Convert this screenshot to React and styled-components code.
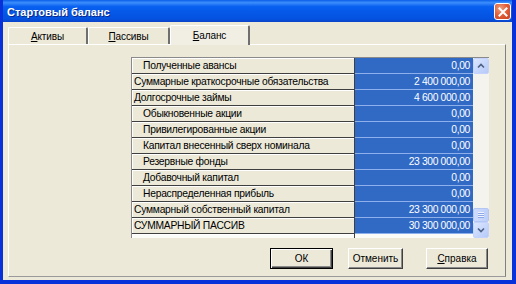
import React from "react";
import styled, { createGlobalStyle } from "styled-components";

const GlobalStyle = createGlobalStyle`
  html, body {
    margin: 0;
    padding: 0;
    background: #0a246a;
  }
  body {
    font-family: "Liberation Sans", Arial, sans-serif;
  }
`;

const rows = [
  { label: "Полученные авансы", value: "0,00", indent: true },
  { label: "Суммарные краткосрочные обязательства", value: "2 400 000,00" },
  { label: "Долгосрочные займы", value: "4 600 000,00" },
  { label: "Обыкновенные акции", value: "0,00", indent: true },
  { label: "Привилегированные акции", value: "0,00", indent: true },
  { label: "Капитал внесенный сверх номинала", value: "0,00", indent: true },
  { label: "Резервные фонды", value: "23 300 000,00", indent: true },
  { label: "Добавочный капитал", value: "0,00", indent: true },
  { label: "Нераспределенная прибыль", value: "0,00", indent: true },
  { label: "Суммарный собственный капитал", value: "23 300 000,00" },
  { label: "СУММАРНЫЙ ПАССИВ", value: "30 300 000,00" },
];

const tabs = [
  { key: "А", rest: "ктивы", width: 80 },
  { key: "П", rest: "ассивы", width: 82 },
  { key: "Б", rest: "аланс", width: 80, active: true },
];

const App = () => {
  return (
    <>
      <GlobalStyle />
      <Window>
        <TitleBar>
          <Title>Стартовый баланс</Title>
          <CloseButton>
            <svg width="10" height="10" viewBox="0 0 10 10">
              <path d="M1.5 1.5 L8.5 8.5 M8.5 1.5 L1.5 8.5" stroke="#fff" strokeWidth="2" strokeLinecap="square" />
            </svg>
          </CloseButton>
        </TitleBar>
        <Body>
          <TabStrip>
            {tabs.map((t) => (
              <Tab key={t.key} $width={t.width} $active={t.active}>
                <u>{t.key}</u>
                {t.rest}
              </Tab>
            ))}
          </TabStrip>
          <Pane>
            <GridWrap>
              <Grid>
                {rows.map((r) => (
                  <Row key={r.label}>
                    <LabelCell $indent={r.indent}>{r.label}</LabelCell>
                    <ValueCell>{r.value}</ValueCell>
                  </Row>
                ))}
                <Row>
                  <LabelCell $blank />
                  <ValueCell $blank />
                </Row>
              </Grid>
              <ScrollBar>
                <ScrollButton>
                  <svg width="8" height="6" viewBox="0 0 8 6">
                    <path d="M1 4.5 L4 1.5 L7 4.5" stroke="#4d6185" strokeWidth="1.6" fill="none" />
                  </svg>
                </ScrollButton>
                <Track />
                <Thumb>
                  <Grip />
                </Thumb>
                <ScrollButton>
                  <svg width="8" height="6" viewBox="0 0 8 6">
                    <path d="M1 1.5 L4 4.5 L7 1.5" stroke="#4d6185" strokeWidth="1.6" fill="none" />
                  </svg>
                </ScrollButton>
              </ScrollBar>
            </GridWrap>
            <ButtonRow>
              <Button $width={63} $default>ОК</Button>
              <Button $width={55} $gap={15}>Отменить</Button>
              <Button $width={62} $gap={23}>
                <u>С</u>правка
              </Button>
            </ButtonRow>
          </Pane>
        </Body>
      </Window>
    </>
  );
};

const Window = styled.div`
  width: 516px;
  height: 284px;
  box-sizing: border-box;
  display: flex;
  flex-direction: column;
  background: #0b47d6;
  border-left: 3px solid #0831d9;
  border-right: 4px solid #0831d9;
  border-bottom: 4px solid #0831d9;
  overflow: hidden;
`;

const TitleBar = styled.div`
  height: 22px;
  margin: 0 -4px 0 -3px;
  padding: 0 5px 0 7px;
  display: flex;
  align-items: center;
  justify-content: space-between;
  background: linear-gradient(
    to bottom,
    #0a5fe9 0%,
    #3c8dfb 12%,
    #0860f0 30%,
    #0557e6 60%,
    #0552e0 85%,
    #0a44c9 100%
  );
`;

const Title = styled.span`
  color: #fff;
  font-family: "Liberation Sans", Arial, sans-serif;
  font-weight: bold;
  font-size: 11px;
  text-shadow: 1px 1px 0 #0a2a8a;
  padding-top: 1px;
`;

const CloseButton = styled.div`
  width: 17px;
  height: 17px;
  margin-top: 1px;
  box-sizing: border-box;
  border: 1px solid #fff;
  border-radius: 3px;
  background: radial-gradient(circle at 35% 30%, #f0a080 0%, #e1603a 45%, #c9401c 100%);
  display: flex;
  align-items: center;
  justify-content: center;
`;

const Body = styled.div`
  flex: 1;
  display: flex;
  flex-direction: column;
  background: #ece9d8;
  padding: 0 6px 3px 5px;
`;

const TabStrip = styled.div`
  height: 22px;
  display: flex;
  align-items: flex-end;
  position: relative;
  z-index: 1;
`;

const Tab = styled.div`
  width: ${(p) => p.$width}px;
  height: ${(p) => (p.$active ? 20 : 17)}px;
  box-sizing: border-box;
  display: flex;
  align-items: center;
  justify-content: center;
  padding-top: ${(p) => (p.$active ? 0 : 1)}px;
  margin-bottom: ${(p) => (p.$active ? -1 : 0)}px;
  background: ${(p) => (p.$active ? "#f1efe4" : "#ece9d8")};
  border-top: 1px solid #fff;
  border-left: 1px solid #fff;
  border-right: 2px solid #6f6f6f;
  border-radius: 2px 2px 0 0;
  font-size: 10px;
  letter-spacing: -0.1px;
  color: #000;
  u {
    text-decoration: underline;
    text-underline-offset: 1px;
  }
`;

const Pane = styled.div`
  flex: 1;
  box-sizing: border-box;
  border-top: 1px solid #fff;
  border-left: 1px solid #fff;
  border-right: 1px solid #808080;
  border-bottom: 1px solid #9a9a9a;
  padding: 12px 0 0 122px;
  display: flex;
  flex-direction: column;
`;

const GridWrap = styled.div`
  width: 358px;
  height: 181px;
  display: flex;
  box-sizing: border-box;
  border-top: 1px solid #8a8a8a;
  border-left: 1px solid #8a8a8a;
  overflow: hidden;
`;

const Grid = styled.div`
  width: 341px;
  display: flex;
  flex-direction: column;
`;

const Row = styled.div`
  height: 16px;
  flex: none;
  display: flex;
`;

const LabelCell = styled.div`
  width: 223px;
  box-sizing: border-box;
  background: ${(p) => (p.$blank ? "#fbfbf8" : "#ece9d8")};
  border-bottom: 1px solid #3f3f3f;
  border-right: 1px solid #3f3f3f;
  box-shadow: inset 1px 1px 0 #fff;
  padding-left: ${(p) => (p.$indent ? 11 : 2)}px;
  font-size: 10.3px;
  letter-spacing: -0.25px;
  line-height: 15px;
  color: #000;
  white-space: nowrap;
  overflow: hidden;
`;

const ValueCell = styled.div`
  flex: 1;
  box-sizing: border-box;
  background: ${(p) => (p.$blank ? "#fbfbf8" : "#316ac5")};
  border-bottom: 1px solid #8db0ec;
  padding-right: 3px;
  text-align: right;
  font-size: 10.3px;
  letter-spacing: -0.35px;
  line-height: 15px;
  color: #fff;
  white-space: nowrap;
`;

const ScrollBar = styled.div`
  width: 16px;
  display: flex;
  flex-direction: column;
  background: #f4f3ee;
`;

const ScrollButton = styled.div`
  height: 16px;
  flex: none;
  box-sizing: border-box;
  border: 1px solid #c3d3fd;
  border-radius: 2px;
  background: linear-gradient(135deg, #dde7fe 0%, #c4d5fc 60%, #b6c9f7 100%);
  display: flex;
  align-items: center;
  justify-content: center;
`;

const Track = styled.div`
  flex: 1;
`;

const Thumb = styled.div`
  height: 14px;
  flex: none;
  box-sizing: border-box;
  border: 1px solid #b3c6f4;
  border-radius: 2px;
  background: linear-gradient(to right, #cfdcfd, #bccffa);
  display: flex;
  align-items: center;
  justify-content: center;
`;

const Grip = styled.div`
  width: 6px;
  height: 6px;
  background: repeating-linear-gradient(to bottom, #eef3ff 0 1px, #8da8e6 1px 2px);
`;

const ButtonRow = styled.div`
  display: flex;
  margin-top: 10px;
  padding-left: 139px;
`;

const Button = styled.div`
  width: ${(p) => p.$width}px;
  height: 21px;
  margin-left: ${(p) => p.$gap || 0}px;
  box-sizing: border-box;
  background: #ece9d8;
  border: 1px solid ${(p) => (p.$default ? "#000" : "#fff")};
  ${(p) =>
    p.$default
      ? "box-shadow: inset 1px 1px 0 #fff, inset -1px -1px 0 #404040, inset -2px -2px 0 #8a8a8a;"
      : "border-right-color: #404040; border-bottom-color: #404040; box-shadow: inset -1px -1px 0 #8a8a8a;"}
  display: flex;
  align-items: center;
  justify-content: center;
  font-size: 10px;
  color: #000;
  u {
    text-decoration: underline;
    text-underline-offset: 1px;
  }
`;

export default App;
